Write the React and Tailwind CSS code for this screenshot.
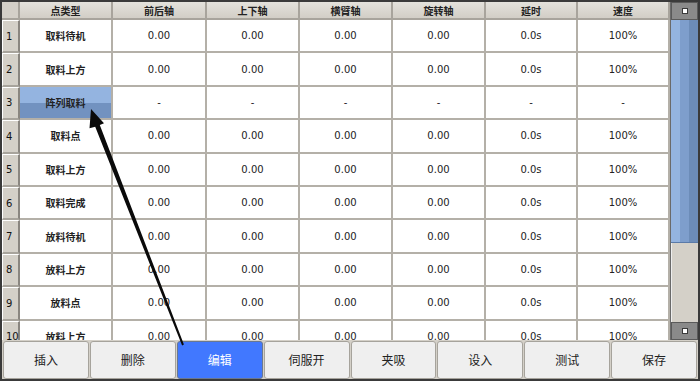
import React from "react";

const cols = ["w-[93px]", "w-[94px]", "w-[93px]", "w-[93px]", "w-[93px]", "w-[92px]", "w-[92px]"];
const headers = ["点类型", "前后轴", "上下轴", "横臂轴", "旋转轴", "延时", "速度"];

const rows = [
  "取料待机",
  "取料上方",
  "阵列取料",
  "取料点",
  "取料上方",
  "取料完成",
  "放料待机",
  "放料上方",
  "放料点",
  "放料上方",
];

const buttons = ["插入", "删除", "编辑", "伺服开", "夹吸", "设入", "测试", "保存"];

const cjk = { fontFamily: '"Noto Sans CJK SC", "Noto Sans", sans-serif' };
const num = { fontFamily: '"DejaVu Sans", "Liberation Sans", sans-serif' };

function ScrollButton() {
  return (
    <div className="h-[18px] bg-[#8a8a8a] border border-[#5a5a5a] flex items-center justify-center">
      <div className="w-[6px] h-[6px] bg-white border border-[#3a3a3a]" />
    </div>
  );
}

export default function App() {
  return (
    <div className="relative w-[700px] h-[381px] bg-[#d4d0c8] overflow-hidden">
      <div className="flex h-[340px] border-t-2 border-l-2 border-r-2 border-[#3a3a3a]">
        {/* table */}
        <div className="w-[668px] h-full overflow-hidden bg-white">
          <div className="flex h-[18px]">
            <div className="w-[18px] shrink-0 bg-[#d4d0c8] border-r-2 border-b-2 border-[#a8a49c]" />
            {headers.map((h, i) => (
              <div
                key={h}
                className={`${cols[i]} shrink-0 bg-gradient-to-b from-[#e4e2dc] to-[#d2cec6] border-r-2 border-b-2 border-[#a8a49c] flex items-center justify-center text-[10px] font-bold text-[#222]`}
                style={cjk}
              >
                {h}
              </div>
            ))}
          </div>
          {rows.map((name, r) => {
            const sel = r === 2;
            return (
              <div key={r} className="flex h-[33.4px]">
                <div className="w-[18px] shrink-0 bg-[#d4d0c8] border-t border-l border-white border-r-2 border-b-2 border-r-[#8a8680] border-b-[#a8a49c] flex items-center pl-[3px] text-[10px] text-[#111]" style={num}>
                  {r + 1}
                </div>
                <div
                  className={`${cols[0]} shrink-0 border-r-2 border-b-2 border-[#b4b0a8] flex items-center justify-center text-[10px] font-bold text-[#222] ${
                    sel ? "bg-gradient-to-b from-[#94b4e0] from-50% to-[#7292c0] to-50%" : "bg-white"
                  }`}
                  style={cjk}
                >
                  {name}
                </div>
                {[0, 1, 2, 3, 4, 5].map((c) => (
                  <div
                    key={c}
                    className={`${cols[c + 1]} shrink-0 bg-white border-r-2 border-b-2 border-[#b4b0a8] flex items-center justify-center text-[10px] text-[#222]`}
                    style={num}
                  >
                    {sel ? "-" : c === 4 ? "0.0s" : c === 5 ? "100%" : "0.00"}
                  </div>
                ))}
              </div>
            );
          })}
        </div>
        {/* scrollbar */}
        <div className="w-[28px] h-full flex flex-col bg-[#d4d0c8] border-l border-[#6a6a6a]">
          <ScrollButton />
          <div className="h-[223px] flex border-b border-[#5a7aa8]">
            <div className="w-[9px] bg-[#94b4e0]" />
            <div className="w-[9px] bg-[#7e9ecc]" />
            <div className="flex-1 bg-[#6c8cb8]" />
          </div>
          <div className="flex-1 bg-[#d4d0c8] border-l border-[#eeeeee]" />
          <ScrollButton />
        </div>
      </div>

      {/* buttons */}
      <div className="flex gap-[1px] h-[41px] px-[1px] pt-[1px] border-b-2 border-l-2 border-r-2 border-[#3a3a3a]">
        {buttons.map((b, i) => (
          <div
            key={b}
            className={`flex-1 flex items-center justify-center rounded-[3px] text-[12px] ${
              i === 2
                ? "bg-[#4178ff] text-white border border-[#6a7890]"
                : "bg-[#efefef] text-[#222] border border-[#a6a39c]"
            }`}
            style={cjk}
          >
            {b}
          </div>
        ))}
      </div>

      {/* arrow annotation */}
      <svg className="absolute inset-0 pointer-events-none" width="700" height="381" viewBox="0 0 700 381">
        <polygon
          points="91,109 104,123.3 99.8,124.9 183.9,344.6 182.1,345.4 95.2,126.7 89.5,128.3"
          fill="#0a0a0a"
        />
      </svg>
    </div>
  );
}
